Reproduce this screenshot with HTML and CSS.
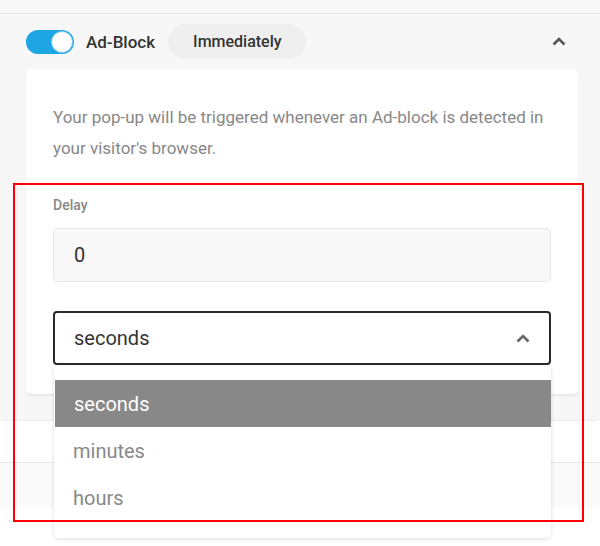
FILE: index.html
```html
<!DOCTYPE html>
<html>
<head>
<meta charset="utf-8">
<link rel="stylesheet" href="styles.css">
</head>
<body>
<div class="top-strip"></div>
<section class="trigger">
  <div class="trigger-head">
    <span class="toggle"><span class="knob"></span></span>
    <span class="trigger-name">Ad-Block</span>
    <span class="pill">Immediately</span>
    <svg class="head-chevron" width="14" height="9" viewBox="0 0 14 9"><path d="M1.5 7.5 L7 2 L12.5 7.5" fill="none" stroke="#555" stroke-width="2.6"/></svg>
  </div>
  <div class="card">
    <p class="desc">Your pop-up will be triggered whenever an Ad-block is detected in your visitor's browser.</p>
    <label class="field-label">Delay</label>
    <div class="input">0</div>
    <div class="select-wrap">
      <div class="select">
        <span>seconds</span>
        <svg width="14" height="9" viewBox="0 0 14 9"><path d="M1.5 7.5 L7 2 L12.5 7.5" fill="none" stroke="#666" stroke-width="2.6"/></svg>
      </div>
      <ul class="menu">
        <li class="active">seconds</li>
        <li>minutes</li>
        <li>hours</li>
      </ul>
    </div>
  </div>
</section>
<div class="gap-row"></div>
<div class="next-row"></div>
<div class="highlight-box"></div>
</body>
</html>
```
FILE: styles.css
```css
* { box-sizing: border-box; }
html, body { margin: 0; padding: 0; }
body {
  background: #fff;
  font-family: Roboto, "Noto Sans", sans-serif;
  width: 600px;
  height: 546px;
  overflow: hidden;
  position: relative;
}
.top-strip {
  height: 14px;
  background: #f8f8f8;
  border-bottom: 1px solid #e4e4e4;
}
.trigger {
  background: #f7f7f7;
  padding: 0 22px 26px 26px;
  border-bottom: 1px solid #ececec;
  border-radius: 0 0 4px 4px;
}
.trigger-head {
  height: 55px;
  display: flex;
  align-items: center;
}
.toggle {
  width: 48px;
  height: 24px;
  border-radius: 12px;
  background: #1ea5e3;
  position: relative;
  flex: none;
}
.knob {
  position: absolute;
  right: 1px;
  top: 1px;
  width: 22px;
  height: 22px;
  border-radius: 50%;
  background: #fff;
  border: 1px solid #7fcdf0;
}
.trigger-name {
  margin-left: 12px;
  font-size: 17px;
  font-weight: 500;
  color: #333;
}
.pill {
  margin-left: 13px;
  height: 35px;
  padding: 0 24px 0 25px;
  border-radius: 18px;
  background: #efefef;
  display: flex;
  align-items: center;
  font-size: 16px;
  font-weight: 500;
  color: #333;
}
.head-chevron {
  margin-left: auto;
  margin-right: 12px;
}
.card {
  background: #fff;
  border-radius: 5px;
  box-shadow: 0 2px 2px rgba(0,0,0,0.06);
  padding: 33px 27px 29px 27px;
}
.desc {
  margin: 0 0 31px 0;
  font-size: 17px;
  line-height: 31px;
  color: #888;
}
.field-label {
  display: block;
  font-size: 14px;
  font-weight: 500;
  line-height: 20px;
  color: #888;
  margin-bottom: 13px;
}
.input {
  height: 54px;
  background: #f8f8f8;
  border: 1px solid #e6e6e6;
  border-radius: 5px;
  display: flex;
  align-items: center;
  padding-left: 20px;
  font-size: 20px;
  color: #333;
}
.select-wrap {
  position: relative;
  margin-top: 29px;
}
.select {
  height: 54px;
  border: 2px solid #2a2a2a;
  border-radius: 4px;
  display: flex;
  align-items: center;
  justify-content: space-between;
  padding: 0 19px 0 19px;
  font-size: 20px;
  color: #333;
}
.menu {
  position: absolute;
  left: 1px;
  right: 0;
  top: 55px;
  margin: 0;
  padding: 14px 0 17px 0;
  list-style: none;
  background: #fff;
  border-radius: 0 0 5px 5px;
  box-shadow: 0 1px 4px rgba(0,0,0,0.14);
  z-index: 2;
}
.menu li {
  height: 47px;
  display: flex;
  align-items: center;
  padding-left: 19px;
  font-size: 20px;
  color: #888;
}
.menu li.active {
  background: #888;
  color: #fff;
  margin-left: 1px;
}
.gap-row {
  height: 42px;
  border-bottom: 1px solid #e8e8e8;
}
.next-row {
  height: 44px;
  background: #fafafa;
}
.highlight-box {
  position: absolute;
  left: 13px;
  top: 183px;
  width: 571px;
  height: 339px;
  border: 2px solid #ff0000;
  z-index: 3;
}
```
